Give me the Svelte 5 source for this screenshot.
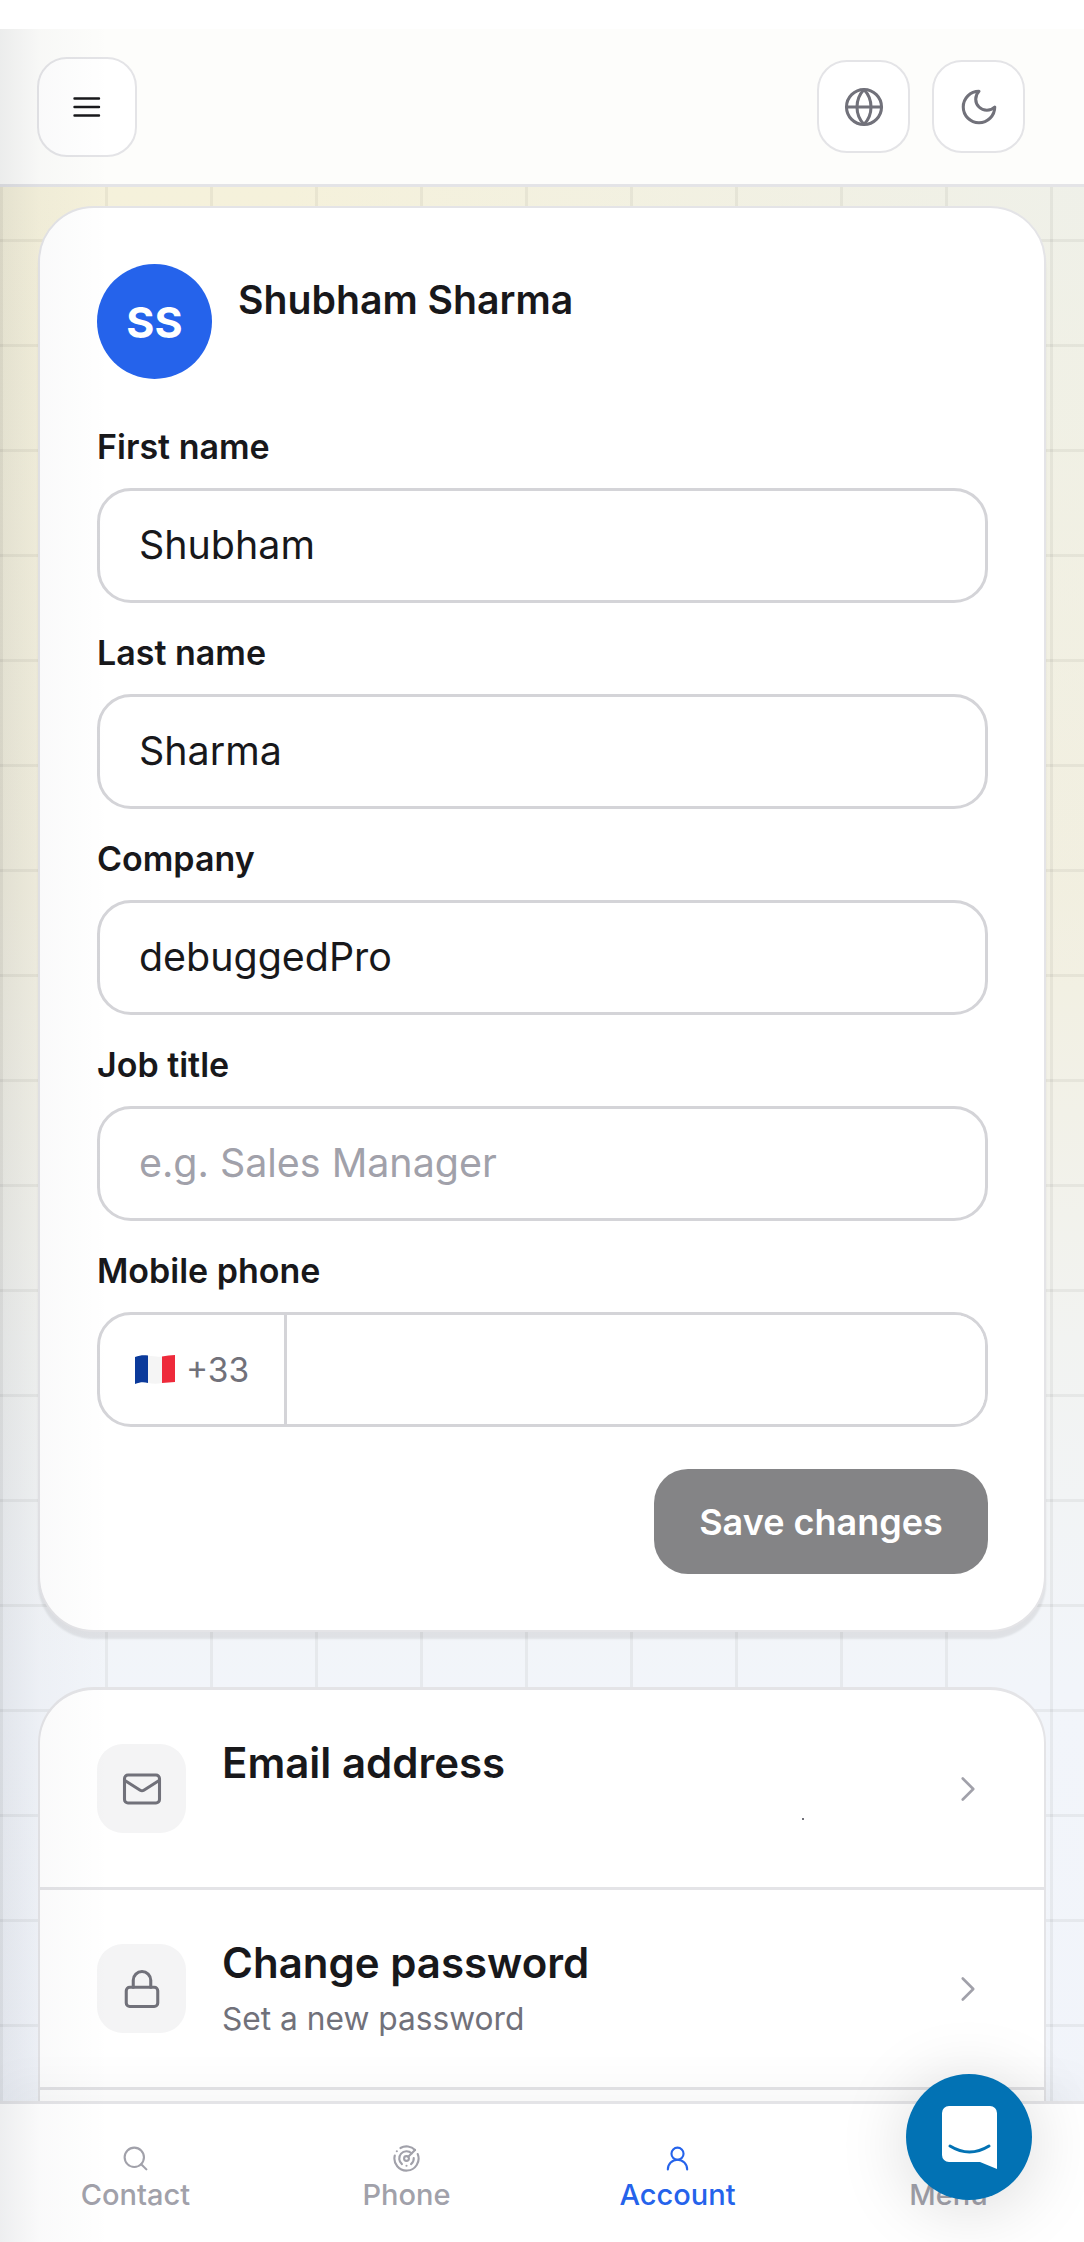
<script>
	const fields = [
		{ label: 'First name', value: 'Shubham' },
		{ label: 'Last name', value: 'Sharma' },
		{ label: 'Company', value: 'debuggedPro' },
		{ label: 'Job title', value: '', placeholder: 'e.g. Sales Manager' }
	]
</script>

<div class="page">
	<header>
		<button class="icon-btn menu" type="button" aria-label="Menu">
			<svg width="28" height="22" viewBox="0 0 28 22" fill="none" stroke="#18181b" stroke-width="2.4" stroke-linecap="round">
				<path d="M1.5 2.5h24.5M1.5 11h24.5M1.5 19.5h24.5" />
			</svg>
		</button>
		<div class="actions">
			<button class="icon-btn" type="button" aria-label="Language">
				<svg class="ico" width="42" height="42" viewBox="0 0 24 24">
					<circle cx="12" cy="12" r="10" />
					<path d="M12 2a14.5 14.5 0 0 0 0 20 14.5 14.5 0 0 0 0-20" />
					<path d="M2 12h20" />
				</svg>
			</button>
			<button class="icon-btn" type="button" aria-label="Theme">
				<svg class="ico" width="42" height="42" viewBox="0 0 24 24">
					<path d="M12 3a6 6 0 0 0 9 9 9 9 0 1 1-9-9Z" />
				</svg>
			</button>
		</div>
	</header>

	<main>
		<section class="card profile">
			<div class="head">
				<div class="avatar">SS</div>
				<h2>Shubham Sharma</h2>
			</div>

			{#each fields as f}
				<div class="field">
					<label for={f.label}>{f.label}</label>
					<input id={f.label} type="text" value={f.value} placeholder={f.placeholder} />
				</div>
			{/each}

			<div class="field">
				<label for="phone">Mobile phone</label>
				<div class="phone">
					<div class="dial">
						<svg width="40" height="29" viewBox="0 0 40 29">
							<path fill="#0b3a9b" d="M0 2C5 0 9 0 13 .5V28C9 27 5 27 0 29Z" />
							<path fill="#f5f5f5" d="M13 .5C18 1.5 23 2 27 1.5V28C23 29 18 29 13 28Z" />
							<path fill="#ee2a3b" d="M27 1.5C31 1 36 0 40 0V27C36 27 31 28 27 28Z" />
						</svg>
						<span>+33</span>
					</div>
					<input id="phone" type="tel" />
				</div>
			</div>

			<div class="save-row">
				<button class="save" type="button">Save changes</button>
			</div>
		</section>

		<section class="card list">
			<div class="row">
				<div class="row-icon">
					<svg class="ico" width="42" height="42" viewBox="0 0 24 24">
						<rect x="2" y="4" width="20" height="16" rx="2" />
						<path d="m22 7-8.97 5.7a1.94 1.94 0 0 1-2.06 0L2 7" />
					</svg>
				</div>
				<div class="row-text">
					<div class="title">Email address</div>
					<div class="sub"><span class="dot"></span></div>
				</div>
				<svg class="chev" width="42" height="42" viewBox="0 0 24 24"><path d="m9 18 6-6-6-6" /></svg>
			</div>
			<div class="row">
				<div class="row-icon">
					<svg class="ico" width="42" height="42" viewBox="0 0 24 24">
						<rect x="3" y="11" width="18" height="11" rx="2" />
						<path d="M7 11V7a5 5 0 0 1 10 0v4" />
					</svg>
				</div>
				<div class="row-text">
					<div class="title">Change password</div>
					<div class="sub">Set a new password</div>
				</div>
				<svg class="chev" width="42" height="42" viewBox="0 0 24 24"><path d="m9 18 6-6-6-6" /></svg>
			</div>
			<div class="row"></div>
		</section>
	</main>

	<nav>
		<div class="tab">
			<svg width="29" height="29" viewBox="0 0 24 24"><circle cx="11" cy="11" r="8" /><path d="m21 21-4.3-4.3" /></svg>
			<span>Contact</span>
		</div>
		<div class="tab">
			<svg width="29" height="29" viewBox="0 0 24 24">
				<path d="M19.07 4.93A10 10 0 0 0 6.99 3.34" />
				<path d="M4 6h.01" />
				<path d="M2.29 9.62A10 10 0 1 0 21.31 8.35" />
				<path d="M16.24 7.76A6 6 0 1 0 8.23 16.67" />
				<path d="M12 18h.01" />
				<path d="M17.99 11.66A6 6 0 0 1 15.77 16.67" />
				<circle cx="12" cy="12" r="2" />
				<path d="m13.41 10.59 5.66-5.66" />
			</svg>
			<span>Phone</span>
		</div>
		<div class="tab active">
			<svg width="29" height="29" viewBox="0 0 24 24"><circle cx="12" cy="8" r="5" /><path d="M20 21a8 8 0 0 0-16 0" /></svg>
			<span>Account</span>
		</div>
		<div class="tab">
			<svg width="29" height="29" viewBox="0 0 24 24"></svg>
			<span>Menu</span>
		</div>
	</nav>

	<button class="chat" type="button" aria-label="Chat">
		<svg width="55" height="63" viewBox="0 0 55 63">
			<path fill="#fff" d="M7 0H48a7 7 0 0 1 7 7V63L38 56H7a7 7 0 0 1-7-7V7a7 7 0 0 1 7-7Z" />
			<path fill="none" stroke="#0272b4" stroke-width="3" stroke-linecap="round" d="M8 40Q27.5 52 47 40" />
		</svg>
	</button>

	<div class="edge"></div>
</div>

<style>
	:global(body) {
		margin: 0;
		background: #fff;
	}

	.page {
		position: relative;
		width: 1084px;
		height: 2242px;
		overflow: hidden;
		font-family: Inter, "Liberation Sans", sans-serif;
		color: #18181b;
		padding-top: 29px;
		box-sizing: border-box;
	}

	* {
		box-sizing: border-box;
	}

	header {
		height: 158px;
		background: #fdfdfb;
		border-bottom: 3px solid #e4e4e7;
		display: flex;
		align-items: center;
		justify-content: space-between;
		padding: 0 59px 0 37px;
	}

	.icon-btn {
		width: 93px;
		height: 93px;
		background: #fff;
		border: 2px solid #e4e4e7;
		border-radius: 30px;
		padding: 0;
		display: flex;
		align-items: center;
		justify-content: center;
	}

	.menu {
		width: 100px;
		height: 100px;
	}

	.actions {
		display: flex;
		gap: 22px;
	}

	.ico {
		fill: none;
		stroke: #71717a;
		stroke-width: 1.75;
		stroke-linecap: round;
		stroke-linejoin: round;
	}

	main {
		height: 2055px;
		padding: 19px 38px 0;
		background-image:
			linear-gradient(to right, rgba(0, 0, 0, .05) 3px, transparent 3px),
			linear-gradient(to bottom, rgba(0, 0, 0, .05) 3px, transparent 3px),
			radial-gradient(800px 800px at 100% 0, rgba(238, 240, 235, .85), rgba(238, 240, 235, 0)),
			linear-gradient(to bottom, #f5f1db 0, #f2efdf 700px, #f2f3f1 1150px, #f2f5fa 1500px, #f1f4fa 100%);
		background-size: 105px 105px, 105px 105px, auto, auto;
		background-position: 0 -53px, 0 -53px, 0 0, 0 0;
	}

	.card {
		width: 1008px;
		background: #fff;
		border: 2px solid #e4e4e7;
		border-radius: 56px;
	}

	.profile {
		height: 1426px;
		padding: 56px 56px 0 57px;
		box-shadow: 0 7px 2px rgba(0, 0, 0, .08);
	}

	.head {
		display: flex;
		gap: 26px;
		margin-bottom: 18px;
	}

	.avatar {
		width: 115px;
		height: 115px;
		border-radius: 50%;
		background: #2563eb;
		color: #fff;
		font-size: 43px;
		font-weight: 700;
		display: flex;
		align-items: center;
		justify-content: center;
	}

	h2 {
		margin: 13px 0 0;
		font-size: 39.2px;
		line-height: 46px;
		font-weight: 600;
	}

	.field {
		padding-top: 25px;
	}

	label {
		display: block;
		font-size: 34px;
		line-height: 48px;
		font-weight: 600;
		margin-bottom: 17px;
	}

	.field:not(:first-of-type) {
		padding-top: 26px;
	}

	input {
		display: block;
		width: 100%;
		height: 115px;
		border: 3px solid #d4d4d8;
		border-radius: 34px;
		padding: 0 39px 2px;
		background: #fff;
		font: 400 39.4px Inter, "Liberation Sans", sans-serif;
		color: #18181b;
		outline: none;
	}

	input::placeholder {
		color: #a1a1aa;
		opacity: 1;
	}

	.phone {
		display: flex;
		height: 115px;
		border: 3px solid #d4d4d8;
		border-radius: 34px;
		overflow: hidden;
	}

	.dial {
		width: 187px;
		flex: none;
		border-right: 3px solid #d4d4d8;
		display: flex;
		align-items: center;
		gap: 11px;
		padding-left: 35px;
		font-size: 33.5px;
		color: #71717a;
	}

	.phone input {
		flex: 1;
		height: 100%;
		border: 0;
		border-radius: 0;
	}

	.save-row {
		display: flex;
		justify-content: flex-end;
		margin-top: 42px;
	}

	.save {
		width: 334px;
		height: 105px;
		border: 0;
		border-radius: 34px;
		background: #848486;
		color: #fff;
		font: 600 36px Inter, "Liberation Sans", sans-serif;
	}

	.list {
		margin-top: 55px;
		border-top-width: 3px;
		overflow: hidden;
	}

	.row {
		height: 200px;
		display: flex;
		align-items: center;
		padding: 0 56px 0 57px;
		border-bottom: 3px solid #e4e4e7;
	}

	.row-icon {
		width: 89px;
		height: 89px;
		flex: none;
		background: #f4f4f5;
		border-radius: 26px;
		display: flex;
		align-items: center;
		justify-content: center;
	}

	.row-text {
		flex: 1;
		margin-left: 36px;
	}

	.title {
		font-size: 42px;
		line-height: 50px;
		font-weight: 600;
	}

	.sub {
		margin-top: 10px;
		height: 42px;
		font-size: 31.7px;
		line-height: 42px;
		color: #71717a;
		display: flex;
		align-items: center;
	}

	.dot {
		width: 2px;
		height: 2px;
		margin-left: 580px;
		background: #71717a;
	}

	.chev {
		fill: none;
		stroke: #a1a1aa;
		stroke-width: 1.5;
		stroke-linecap: round;
		stroke-linejoin: round;
		margin-right: -1px;
	}

	nav {
		position: absolute;
		left: 0;
		right: 0;
		bottom: 0;
		height: 141px;
		background: #fff;
		border-top: 3px solid #e4e4e7;
		box-shadow: 0 -20px 40px rgba(0, 0, 0, .03);
		display: grid;
		grid-template-columns: repeat(4, 1fr);
	}

	.tab {
		display: flex;
		flex-direction: column;
		align-items: center;
		padding-top: 40px;
		gap: 3px;
		font-size: 29px;
		line-height: 38px;
		font-weight: 500;
		color: #a1a1aa;
	}

	.tab svg {
		fill: none;
		stroke: currentColor;
		stroke-width: 1.75;
		stroke-linecap: round;
		stroke-linejoin: round;
	}

	.active {
		color: #2563eb;
	}

	.chat {
		position: absolute;
		right: 52px;
		bottom: 42px;
		width: 126px;
		height: 126px;
		border: 0;
		border-radius: 50%;
		background: #0272b4;
		box-shadow: 0 8px 70px rgba(0, 0, 0, .15);
		display: flex;
		align-items: center;
		justify-content: center;
		padding: 0;
	}

	.edge {
		position: absolute;
		left: 0;
		top: 29px;
		bottom: 0;
		width: 110px;
		background: linear-gradient(to right, rgba(30, 40, 60, .08), rgba(30, 40, 60, .025) 40px, transparent);
		pointer-events: none;
	}
</style>
